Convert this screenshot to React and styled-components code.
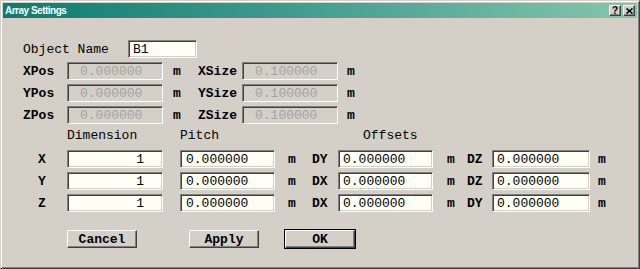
import React from "react";
import styled, { createGlobalStyle } from "styled-components";

const GlobalStyle = createGlobalStyle`
  html, body {
    margin: 0;
    padding: 0;
    background: #d4d0c8;
  }
`;

const Window = styled.div`
  background: #d4d0c8;
  border: 1px solid;
  border-color: #d4d0c8 #404040 #404040 #d4d0c8;
  box-shadow: inset 1px 1px #fff, inset -1px -1px #808080;
  box-sizing: border-box;
  font-family: "Liberation Mono", "Courier New", monospace;
  font-size: 13px;
  color: #000;
  height: 269px;
  padding: 2px;
  width: 640px;
`;

const TitleBar = styled.div`
  align-items: center;
  background: linear-gradient(to right, #0d7b70, #3e9c8e 45%, #86c5ad);
  display: flex;
  height: 15px;
  justify-content: space-between;
  padding: 0 2px 0 2px;
`;

const Title = styled.span`
  color: #fff;
  font-family: "Liberation Sans", Arial, sans-serif;
  font-size: 10px;
  font-weight: 700;
  letter-spacing: -0.5px;
`;

const CaptionButtons = styled.div`
  display: flex;
  gap: 2px;
`;

const CaptionButton = styled.div`
  align-items: center;
  background: #d4d0c8;
  border: 1px solid;
  border-color: #fff #404040 #404040 #fff;
  box-shadow: inset -1px -1px #808080;
  box-sizing: border-box;
  display: flex;
  font-family: "Liberation Sans", Arial, sans-serif;
  font-size: 10px;
  font-weight: 700;
  height: 11px;
  justify-content: center;
  line-height: 1;
  width: 12px;
`;

const Body = styled.div`
  padding: 22px 0 0 20px;
`;

const Row = styled.div`
  align-items: center;
  display: flex;
  height: 18px;
  margin-top: ${(p) => p.$top ?? 4}px;
`;

const Label = styled.span`
  box-sizing: border-box;
  font-weight: ${(p) => (p.$plain ? 400 : 700)};
  padding-left: ${(p) => p.$pl || 0}px;
  white-space: pre;
  width: ${(p) => p.$w}px;
`;

const Unit = styled.span`
  box-sizing: border-box;
  font-weight: 700;
  padding-left: ${(p) => p.$pl}px;
  width: ${(p) => p.$w || 30}px;
`;

const Field = styled.input`
  background: ${(p) => (p.disabled ? "#d4d0c8" : "#fffff6")};
  border: 1px solid;
  border-color: #808080 #fff #fff #808080;
  box-shadow: inset 1px 1px #404040, inset -1px -1px #d4d0c8;
  box-sizing: border-box;
  color: ${(p) => (p.disabled ? "#a4a4a4" : "#000")};
  font-family: "Liberation Mono", "Courier New", monospace;
  font-size: 13px;
  height: 18px;
  margin: 0;
  margin-left: ${(p) => p.$ml || 0}px;
  outline: none;
  padding: 0 ${(p) => p.$pr || 0}px 0 ${(p) => p.$pl || 0}px;
  text-align: ${(p) => p.$align || "left"};
  width: ${(p) => p.$w}px;
`;

const Header = styled.span`
  box-sizing: border-box;
  width: ${(p) => p.$w}px;
`;

const Buttons = styled.div`
  display: flex;
  margin: 18px 0 0 44px;
`;

const Button = styled.button`
  background: #d4d0c8;
  border: 1px solid;
  border-color: #fff #404040 #404040 #fff;
  box-shadow: ${(p) =>
    p.$default
      ? "inset -1px -1px #808080, 0 0 0 1px #000"
      : "inset -1px -1px #808080"};
  box-sizing: border-box;
  color: #000;
  font-family: "Liberation Mono", "Courier New", monospace;
  font-size: 13px;
  font-weight: 700;
  height: 18px;
  margin-left: ${(p) => p.$ml || 0}px;
  padding: 0;
  width: 70px;
`;

const posRows = [
  ["XPos", "XSize"],
  ["YPos", "YSize"],
  ["ZPos", "ZSize"],
];

const arrayRows = [
  ["X", "DY", "DZ"],
  ["Y", "DX", "DZ"],
  ["Z", "DX", "DY"],
];

export default function App() {
  return (
    <>
      <GlobalStyle />
      <Window>
        <TitleBar>
          <Title>Array Settings</Title>
          <CaptionButtons>
            <CaptionButton>?</CaptionButton>
            <CaptionButton>
              <svg width="7" height="6" viewBox="0 0 7 6">
                <path d="M0.5 0.5L6.5 5.5M6.5 0.5L0.5 5.5" stroke="#000" strokeWidth="1.6" />
              </svg>
            </CaptionButton>
          </CaptionButtons>
        </TitleBar>
        <Body>
          <Row $top={0}>
            <Label $plain $w={105}>Object Name</Label>
            <Field $w={69} $pl={4} value="B1" readOnly />
          </Row>
          {posRows.map(([pos, size]) => (
            <Row key={pos}>
              <Label $w={44}>{pos}</Label>
              <Field $w={96} $pl={12} value="0.000000" disabled readOnly />
              <Unit $w={35} $pl={10}>m</Unit>
              <Label $w={44}>{size}</Label>
              <Field $w={96} $pl={12} value="0.100000" disabled readOnly />
              <Unit $pl={9}>m</Unit>
            </Row>
          ))}
          <Row $top={2}>
            <Header $w={44} />
            <Header $w={113}>Dimension</Header>
            <Header $w={183}>Pitch</Header>
            <Header $w={100}>Offsets</Header>
          </Row>
          {arrayRows.map(([axis, a, b], i) => (
            <Row key={axis} $top={i === 0 ? 6 : 4}>
              <Label $w={44} $pl={15}>{axis}</Label>
              <Field $w={96} $align="right" $pr={18} value="1" readOnly />
              <Field $w={95} $ml={17} $pl={5} value="0.000000" readOnly />
              <Unit $w={37} $pl={13}>m</Unit>
              <Label $w={26}>{a}</Label>
              <Field $w={95} $pl={4} value="0.000000" readOnly />
              <Unit $w={34} $pl={14}>m</Unit>
              <Label $w={25}>{b}</Label>
              <Field $w={98} $pl={4} value="0.000000" readOnly />
              <Unit $pl={8}>m</Unit>
            </Row>
          ))}
          <Buttons>
            <Button>Cancel</Button>
            <Button $ml={52}>Apply</Button>
            <Button $ml={26} $default>OK</Button>
          </Buttons>
        </Body>
      </Window>
    </>
  );
}
